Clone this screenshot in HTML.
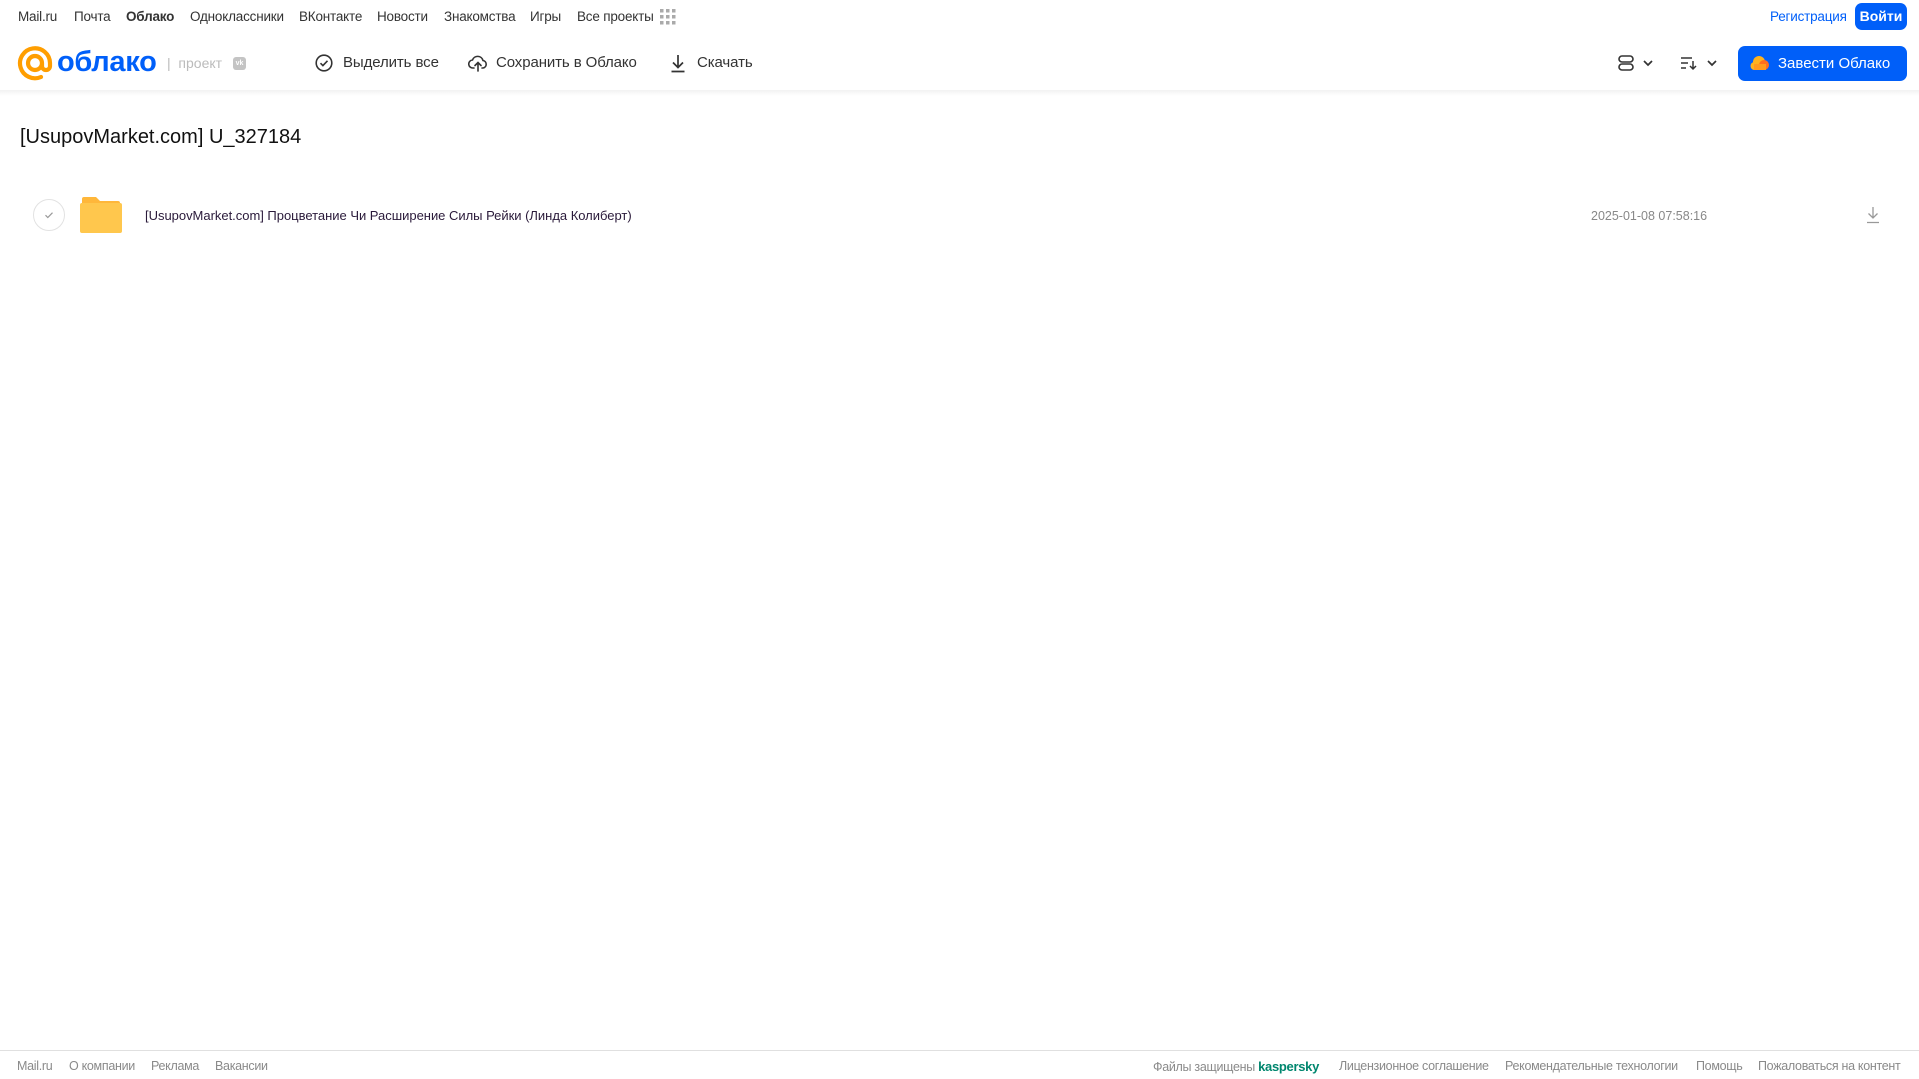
<!DOCTYPE html>
<html><head><meta charset="utf-8"><style>
*{margin:0;padding:0;box-sizing:border-box}
body{width:1919px;height:1079px;background:#fff;font-family:"Liberation Sans",sans-serif;position:relative;overflow:hidden;color:#333}
.a{position:absolute;white-space:nowrap}
.nav{top:9px;font-size:13.5px;color:#333;letter-spacing:-0.2px}
.tb{top:54px;font-size:15px;color:#333;letter-spacing:-0.1px}
.ft{top:1059px;font-size:12.5px;color:#8a8a8a;letter-spacing:-0.3px}
</style></head><body>
<div class="a nav" style="left:18px">Mail.ru</div>
<div class="a nav" style="left:74px">Почта</div>
<div class="a nav" style="left:126px;font-weight:bold">Облако</div>
<div class="a nav" style="left:190px">Одноклассники</div>
<div class="a nav" style="left:299px">ВКонтакте</div>
<div class="a nav" style="left:377px">Новости</div>
<div class="a nav" style="left:444px">Знакомства</div>
<div class="a nav" style="left:530px">Игры</div>
<div class="a nav" style="left:577px">Все проекты</div>
<svg class="a" style="left:660px;top:9px" width="16" height="16"><g fill="#aaa"><rect x="0" y="0" width="3.5" height="3.5"/><rect x="6" y="0" width="3.5" height="3.5"/><rect x="12" y="0" width="3.5" height="3.5"/><rect x="0" y="6" width="3.5" height="3.5"/><rect x="6" y="6" width="3.5" height="3.5"/><rect x="12" y="6" width="3.5" height="3.5"/><rect x="0" y="12" width="3.5" height="3.5"/><rect x="6" y="12" width="3.5" height="3.5"/><rect x="12" y="12" width="3.5" height="3.5"/></g></svg>
<div class="a nav" style="left:1770px;color:#005ff9">Регистрация</div>
<div class="a" style="left:1855px;top:3px;width:52px;height:27px;background:#005ff9;border-radius:7px;color:#fff;font-size:14px;font-weight:bold;text-align:center;line-height:27px">Войти</div>

<div class="a" style="left:0;top:90px;width:1919px;height:6px;background:linear-gradient(#f2f2f2,#fff)"></div>
<svg class="a" style="left:17px;top:45px" width="36" height="36" viewBox="0 0 36 36"><path d="M25 18a7 7 0 1 1-7-7 7 7 0 0 1 7 7v3a4 4 0 0 0 8 0v-3A15 15 0 1 0 24 32" fill="none" stroke="#ff9e00" stroke-width="4.2" stroke-linecap="round"/></svg>
<div class="a" style="left:57px;top:46px;font-size:29px;font-weight:bold;color:#005ff9;letter-spacing:-0.3px">облако</div>
<div class="a" style="left:167px;top:55px;font-size:14px;color:#bbb">|&nbsp; проект</div>
<div class="a" style="left:233px;top:57px;width:13px;height:13px;background:#c4c4c4;border-radius:3px;color:#fff;font-size:7px;font-weight:bold;line-height:13px;text-align:center">vk</div>

<svg class="a" style="left:315px;top:54px" width="18" height="18" viewBox="0 0 18 18"><circle cx="9" cy="9" r="7.8" fill="none" stroke="#333" stroke-width="1.6"/><path d="M5.5 9.2l2.4 2.4 4.6-4.8" fill="none" stroke="#333" stroke-width="1.6"/></svg>
<div class="a tb" style="left:343px">Выделить все</div>
<svg class="a" style="left:468px;top:54px" width="20" height="18" viewBox="0 0 20 18"><path d="M6 14H5a4 4 0 0 1-.5-8A5.5 5.5 0 0 1 15 6.5 3.8 3.8 0 0 1 15 14h-1M10 17V9M7 11.5l3-3 3 3" fill="none" stroke="#333" stroke-width="1.6" stroke-linecap="round"/></svg>
<div class="a tb" style="left:496px">Сохранить в Облако</div>
<svg class="a" style="left:670px;top:54px" width="16" height="19" viewBox="0 0 16 19"><path d="M8 1v12M3 8.5l5 5 5-5M1.5 17.5h13" fill="none" stroke="#333" stroke-width="1.7"/></svg>
<div class="a tb" style="left:697px">Скачать</div>

<svg class="a" style="left:1618px;top:55px" width="40" height="16" viewBox="0 0 40 16"><rect x="1" y="1" width="14" height="6" rx="3" fill="none" stroke="#333" stroke-width="1.6"/><rect x="1" y="9" width="14" height="6" rx="3" fill="none" stroke="#333" stroke-width="1.6"/><path d="M26 6l4 4 4-4" fill="none" stroke="#333" stroke-width="1.7"/></svg>
<svg class="a" style="left:1680px;top:55px" width="42" height="16" viewBox="0 0 42 16"><path d="M1 3h11M1 8h7M1 13h5M13 6v8M10 11l3 3 3-3" fill="none" stroke="#333" stroke-width="1.5"/><path d="M28 6l4 4 4-4" fill="none" stroke="#333" stroke-width="1.7"/></svg>
<div class="a" style="left:1738px;top:46px;width:169px;height:35px;background:#005ff9;border-radius:7px"></div>
<svg class="a" style="left:1750px;top:54px" width="22" height="18" viewBox="0 0 22 18"><circle cx="9" cy="8" r="6" fill="#ffb21e"/><circle cx="4.5" cy="12" r="4" fill="#ffb21e"/><circle cx="14" cy="11" r="5" fill="#ff6e1e"/><rect x="4" y="10" width="12" height="6" fill="#ff9a1e"/></svg>
<div class="a" style="left:1778px;top:55px;font-size:15px;color:#fff">Завести Облако</div>

<div class="a" style="left:20px;top:126px;font-size:20px;color:#111">[UsupovMarket.com] U_327184</div>

<div class="a" style="left:33px;top:199px;width:32px;height:32px;border:1px solid #e2e2e2;border-radius:50%"></div>
<svg class="a" style="left:43px;top:209px" width="12" height="12" viewBox="0 0 12 12"><path d="M2.5 6.2l2.3 2.3 4.7-4.8" fill="none" stroke="#999" stroke-width="1.2"/></svg>
<svg class="a" style="left:80px;top:197px" width="42" height="36" viewBox="0 0 42 36"><path d="M2 2a2 2 0 0 1 2-2h12l4 4h18a2 2 0 0 1 2 2v2H2z" fill="#ffb73a"/><rect x="0" y="6" width="42" height="30" rx="2" fill="#ffc74d"/></svg>
<div class="a" style="left:145px;top:208px;font-size:13px;letter-spacing:-0.02px;color:#2a1a3a">[UsupovMarket.com] Процветание Чи Расширение Силы Рейки (Линда Колиберт)</div>
<div class="a" style="left:1591px;top:209px;font-size:12.5px;color:#888">2025-01-08 07:58:16</div>
<svg class="a" style="left:1866px;top:206px" width="14" height="18" viewBox="0 0 14 18"><path d="M7 1v11M2.5 7.5L7 12l4.5-4.5M1 16.5h12" fill="none" stroke="#999" stroke-width="1.3"/></svg>

<div class="a" style="left:0;top:1050px;width:1919px;height:1px;background:#e0e0e0"></div>
<div class="a ft" style="left:17px">Mail.ru</div>
<div class="a ft" style="left:69px">О компании</div>
<div class="a ft" style="left:151px">Реклама</div>
<div class="a ft" style="left:215px">Вакансии</div>
<div class="a ft" style="left:1153px">Файлы защищены <b style="color:#00866e;font-size:13px">kaspersky</b></div>
<div class="a ft" style="left:1339px">Лицензионное соглашение</div>
<div class="a ft" style="left:1505px">Рекомендательные технологии</div>
<div class="a ft" style="left:1696px">Помощь</div>
<div class="a ft" style="left:1758px">Пожаловаться на контент</div>
</body></html>
